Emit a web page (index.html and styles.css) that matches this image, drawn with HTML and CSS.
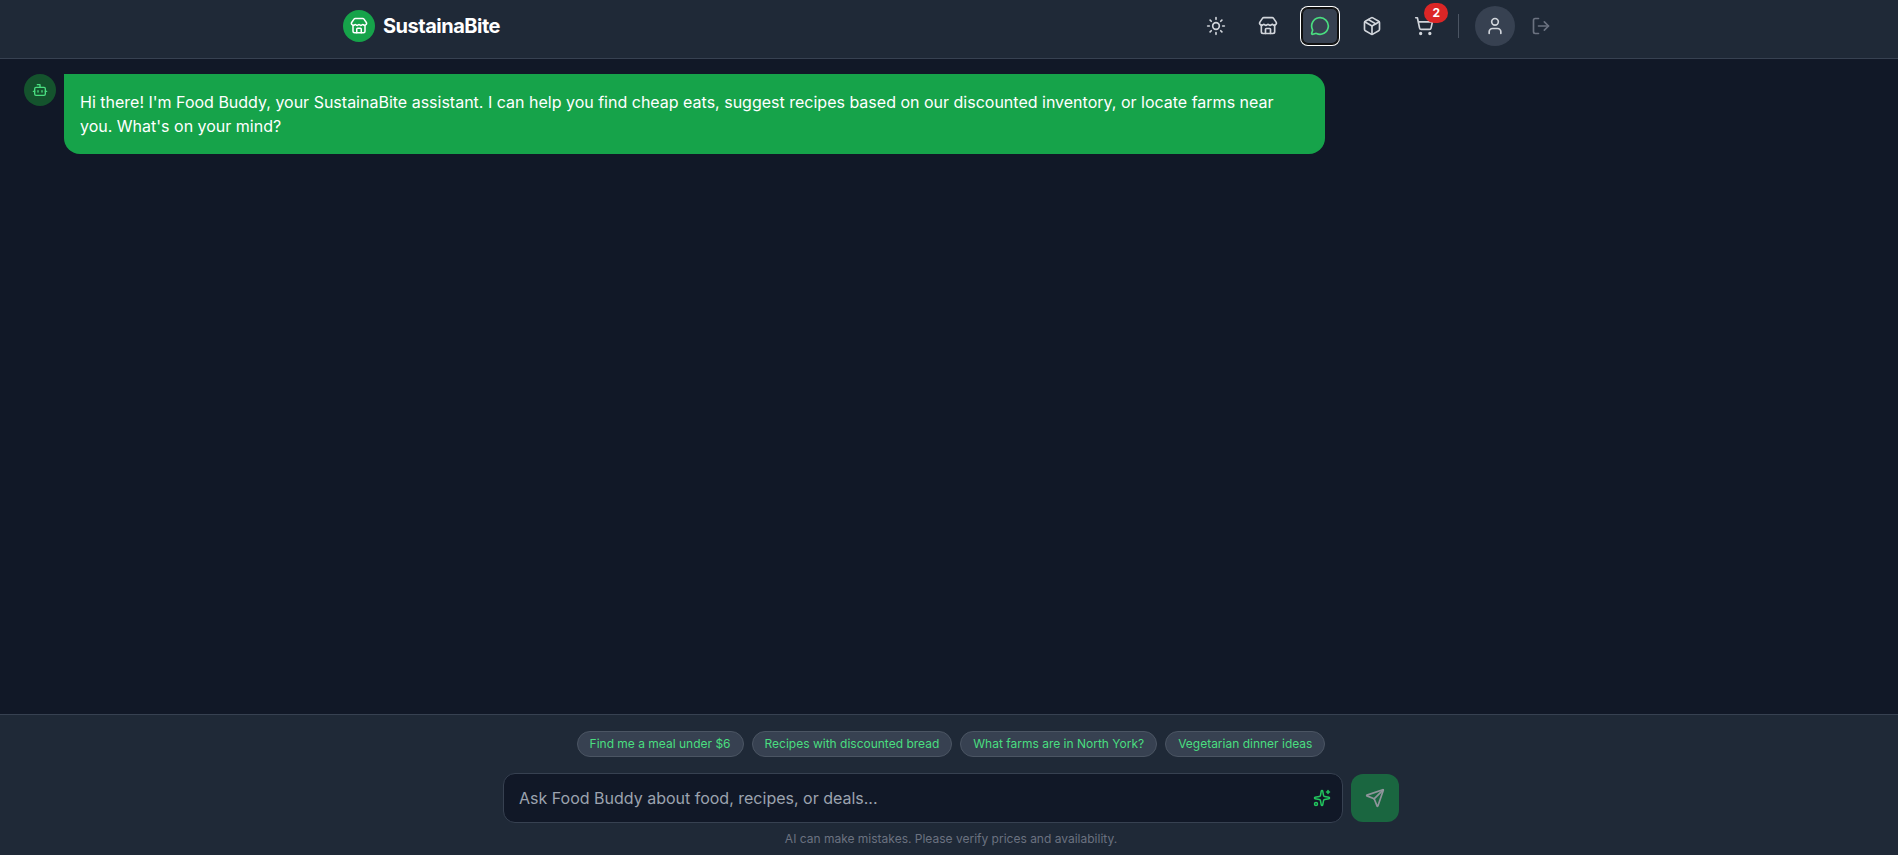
FILE: index.html
```html
<!DOCTYPE html>
<html lang="en">
<head>
    <meta charset="UTF-8">
    <meta name="viewport" content="width=device-width, initial-scale=1.0">
    <title>SustainaBite - Food Buddy</title>
    <link rel="stylesheet" href="styles.css">
</head>
<body>
    <header class="header">
        <div class="header-inner">
            <a class="brand" href="#">
                <span class="brand-logo">
                    <svg class="icon icon-md" viewBox="0 0 24 24"><path d="M15 21v-5a1 1 0 0 0-1-1h-4a1 1 0 0 0-1 1v5"/><path d="M17.774 10.31a1.12 1.12 0 0 0-1.549 0 2.5 2.5 0 0 1-3.451 0 1.12 1.12 0 0 0-1.548 0 2.5 2.5 0 0 1-3.452 0 1.12 1.12 0 0 0-1.549 0 2.5 2.5 0 0 1-3.77-3.248l2.889-4.184A2 2 0 0 1 7 2h10a2 2 0 0 1 1.653.873l2.895 4.192a2.5 2.5 0 0 1-3.774 3.244"/><path d="M4 10.95V19a2 2 0 0 0 2 2h12a2 2 0 0 0 2-2v-8.05"/></svg>
                </span>
                <span class="brand-name">SustainaBite</span>
            </a>

            <nav class="nav">
                <button type="button" class="nav-btn" aria-label="Toggle theme">
                    <svg class="icon" viewBox="0 0 24 24"><circle cx="12" cy="12" r="4"/><path d="M12 2v2"/><path d="M12 20v2"/><path d="m4.93 4.93 1.41 1.41"/><path d="m17.66 17.66 1.41 1.41"/><path d="M2 12h2"/><path d="M20 12h2"/><path d="m6.34 17.66-1.41 1.41"/><path d="m19.07 4.93-1.41 1.41"/></svg>
                </button>
                <button type="button" class="nav-btn" aria-label="Marketplace">
                    <svg class="icon" viewBox="0 0 24 24"><path d="M15 21v-5a1 1 0 0 0-1-1h-4a1 1 0 0 0-1 1v5"/><path d="M17.774 10.31a1.12 1.12 0 0 0-1.549 0 2.5 2.5 0 0 1-3.451 0 1.12 1.12 0 0 0-1.548 0 2.5 2.5 0 0 1-3.452 0 1.12 1.12 0 0 0-1.549 0 2.5 2.5 0 0 1-3.77-3.248l2.889-4.184A2 2 0 0 1 7 2h10a2 2 0 0 1 1.653.873l2.895 4.192a2.5 2.5 0 0 1-3.774 3.244"/><path d="M4 10.95V19a2 2 0 0 0 2 2h12a2 2 0 0 0 2-2v-8.05"/></svg>
                </button>
                <button type="button" class="nav-btn active" aria-label="Food Buddy">
                    <svg class="icon" viewBox="0 0 24 24"><path d="M2.992 16.342a2 2 0 0 1 .094 1.167l-1.065 3.29a1 1 0 0 0 1.236 1.168l3.413-.998a2 2 0 0 1 1.099.092 10 10 0 1 0-4.777-4.719"/></svg>
                </button>
                <button type="button" class="nav-btn" aria-label="Orders">
                    <svg class="icon" viewBox="0 0 24 24"><path d="M11 21.73a2 2 0 0 0 2 0l7-4A2 2 0 0 0 21 16V8a2 2 0 0 0-1-1.73l-7-4a2 2 0 0 0-2 0l-7 4A2 2 0 0 0 3 8v8a2 2 0 0 0 1 1.73z"/><path d="M12 22V12"/><path d="M3.29 7 12 12l8.71-5"/><path d="m7.5 4.27 9 5.15"/></svg>
                </button>
                <button type="button" class="nav-btn" aria-label="Cart">
                    <svg class="icon" viewBox="0 0 24 24"><circle cx="8" cy="21" r="1"/><circle cx="19" cy="21" r="1"/><path d="M2.05 2.05h2l2.66 12.42a2 2 0 0 0 2 1.58h9.78a2 2 0 0 0 1.95-1.57l1.65-7.43H5.12"/></svg>
                    <span class="badge">2</span>
                </button>
                <span class="divider"></span>
                <div class="account">
                    <button type="button" class="profile-btn" aria-label="Profile">
                        <svg class="icon" viewBox="0 0 24 24"><path d="M19 21v-2a4 4 0 0 0-4-4H9a4 4 0 0 0-4 4v2"/><circle cx="12" cy="7" r="4"/></svg>
                    </button>
                    <button type="button" class="nav-btn logout" aria-label="Log out">
                        <svg class="icon" viewBox="0 0 24 24"><path d="m16 17 5-5-5-5"/><path d="M21 12H9"/><path d="M9 21H5a2 2 0 0 1-2-2V5a2 2 0 0 1 2-2h4"/></svg>
                    </button>
                </div>
            </nav>
        </div>
    </header>

    <main class="chat">
        <div class="message">
            <span class="avatar">
                <svg class="icon icon-sm" viewBox="0 0 24 24"><path d="M12 8V4H8"/><rect width="16" height="12" x="4" y="8" rx="2"/><path d="M2 14h2"/><path d="M20 14h2"/><path d="M15 13v2"/><path d="M9 13v2"/></svg>
            </span>
            <p class="bubble">Hi there! I'm Food Buddy, your SustainaBite assistant. I can help you find cheap eats, suggest recipes based on our discounted inventory, or locate farms near you. What's on your mind?</p>
        </div>
    </main>

    <footer class="composer">
        <div class="composer-inner">
            <div class="suggestions">
                <button type="button" class="chip">Find me a meal under $6</button>
                <button type="button" class="chip">Recipes with discounted bread</button>
                <button type="button" class="chip">What farms are in North York?</button>
                <button type="button" class="chip">Vegetarian dinner ideas</button>
            </div>

            <form class="chat-form">
                <div class="input-wrap">
                    <input type="text" class="chat-input" name="message" aria-label="Message" placeholder="Ask Food Buddy about food, recipes, or deals...">
                    <svg class="icon icon-md sparkle" viewBox="0 0 24 24"><path d="M11.017 2.814a1 1 0 0 1 1.966 0l1.051 5.558a2 2 0 0 0 1.594 1.594l5.558 1.051a1 1 0 0 1 0 1.966l-5.558 1.051a2 2 0 0 0-1.594 1.594l-1.051 5.558a1 1 0 0 1-1.966 0l-1.051-5.558a2 2 0 0 0-1.594-1.594l-5.558-1.051a1 1 0 0 1 0-1.966l5.558-1.051a2 2 0 0 0 1.594-1.594z"/><path d="M20 2v4"/><path d="M22 4h-4"/><circle cx="4" cy="20" r="2"/></svg>
                </div>
                <button type="submit" class="send-btn" aria-label="Send" disabled>
                    <svg class="icon" viewBox="0 0 24 24"><path d="M14.536 21.686a.5.5 0 0 0 .937-.024l6.5-19a.496.496 0 0 0-.635-.635l-19 6.5a.5.5 0 0 0-.024.937l7.93 3.18a2 2 0 0 1 1.112 1.11z"/><path d="m21.854 2.147-10.94 10.939"/></svg>
                </button>
            </form>

            <p class="disclaimer">AI can make mistakes. Please verify prices and availability.</p>
        </div>
    </footer>
</body>
</html>
```
FILE: styles.css
```css
* {
    box-sizing: border-box;
}

body {
    margin: 0;
    min-height: 100vh;
    display: flex;
    flex-direction: column;
    background-color: #111827;
    color: #fff;
    font-family: Inter, "Liberation Sans", sans-serif;
    font-size: 16px;
    line-height: 24px;
}

p {
    margin: 0;
}

button, input {
    font-family: inherit;
}

button {
    padding: 0;
    border: none;
    background: none;
    cursor: pointer;
}

.icon {
    display: block;
    width: 20px;
    height: 20px;
    fill: none;
    stroke: currentColor;
    stroke-width: 2;
    stroke-linecap: round;
    stroke-linejoin: round;
}

.icon-md {
    width: 18px;
    height: 18px;
}

.icon-sm {
    width: 16px;
    height: 16px;
}

/* Header */
.header {
    padding: 6px 0 12px 4px;
    background-color: #1f2937;
    border-bottom: 1px solid #374151;
}

.header-inner {
    max-width: 1280px;
    margin: 0 auto;
    padding: 0 32px;
    display: flex;
    align-items: center;
    justify-content: space-between;
}

.brand {
    display: flex;
    align-items: center;
    gap: 8px;
    color: #fff;
    text-decoration: none;
}

.brand-logo {
    display: flex;
    align-items: center;
    justify-content: center;
    width: 32px;
    height: 32px;
    border-radius: 50%;
    background-color: #16a34a;
}

.brand-name {
    font-size: 20px;
    line-height: 28px;
    font-weight: 700;
    letter-spacing: -0.025em;
}

.nav {
    display: flex;
    align-items: center;
    gap: 16px;
}

.nav-btn {
    position: relative;
    padding: 8px;
    border-radius: 6px;
    color: #d1d5db;
}

.nav-btn.active {
    background-color: #374151;
    color: #4ade80;
    box-shadow: inset 0 0 0 1px #101010, 0 0 0 1px #101010, 0 0 0 2px #fff;
}

.badge {
    position: absolute;
    top: -5px;
    right: -6px;
    padding: 2px 8px;
    border-radius: 10px;
    background-color: #dc2626;
    color: #fff;
    font-size: 12px;
    line-height: 16px;
    font-weight: 700;
}

.divider {
    width: 1px;
    height: 24px;
    background-color: #4b5563;
}

.account {
    display: flex;
    align-items: center;
    gap: 8px;
}

.profile-btn {
    padding: 10px;
    border-radius: 50%;
    background-color: #374151;
    color: #d1d5db;
}

.logout {
    color: #6b7280;
}

/* Messages */
.chat {
    flex: 1;
    padding: 15px 16px 16px 24px;
}

.message {
    display: flex;
    align-items: flex-start;
    gap: 8px;
    max-width: 70%;
}

.avatar {
    flex-shrink: 0;
    display: flex;
    align-items: center;
    justify-content: center;
    width: 32px;
    height: 32px;
    border-radius: 50%;
    background-color: #14532d;
    color: #4ade80;
}

.bubble {
    padding: 16px;
    border-radius: 0 16px 16px 16px;
    background-color: #16a34a;
}

/* Composer */
.composer {
    padding: 16px 0 8px 4px;
    background-color: #1f2937;
    border-top: 1px solid #374151;
}

.composer-inner {
    max-width: 896px;
    margin: 0 auto;
}

.suggestions {
    display: flex;
    flex-wrap: wrap;
    justify-content: center;
    gap: 8px;
    margin-bottom: 16px;
}

.chip {
    padding: 4px 12px;
    border: 1px solid #4b5563;
    border-radius: 13px;
    background-color: #374151;
    color: #4ade80;
    font-size: 12px;
    line-height: 16px;
}

.chat-form {
    display: flex;
    align-items: center;
    gap: 8px;
    margin-bottom: 8px;
}

.input-wrap {
    position: relative;
    flex: 1;
}

.chat-input {
    display: block;
    width: 100%;
    height: 50px;
    padding: 12px 48px 12px 15px;
    border: 1px solid #374151;
    border-radius: 12px;
    background-color: #111827;
    color: #fff;
    font-size: 16px;
}

.chat-input::placeholder {
    color: #9ca3af;
}

.sparkle {
    position: absolute;
    top: 16px;
    right: 12px;
    color: #22c55e;
    pointer-events: none;
}

.send-btn {
    padding: 14px;
    border-radius: 12px;
    background-color: #16a34a;
    color: #fff;
}

.send-btn:disabled {
    opacity: 0.5;
    cursor: not-allowed;
}

.disclaimer {
    color: #6b7280;
    font-size: 12px;
    line-height: 16px;
    text-align: center;
}
```
